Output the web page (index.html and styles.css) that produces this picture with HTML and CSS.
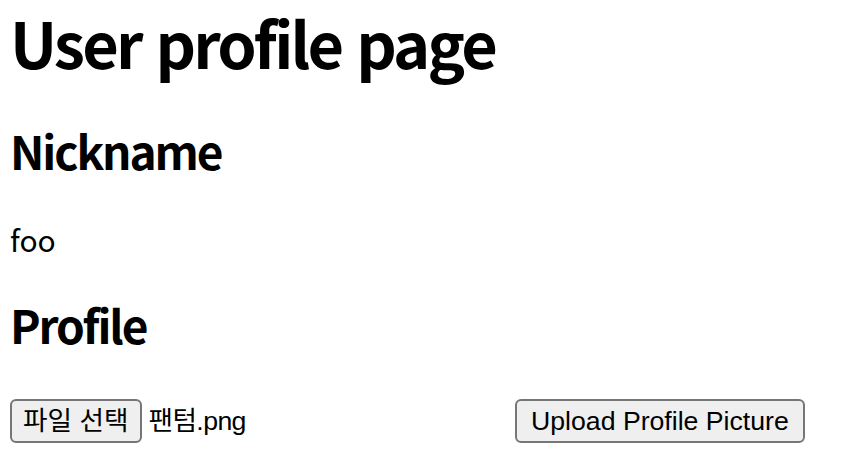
FILE: index.html
```html
<!DOCTYPE html>
<html lang="ko">
<head>
<meta charset="utf-8">
<title>User profile page</title>
<link rel="stylesheet" href="styles.css">
</head>
<body>
<main class="page">
  <h1 class="page-title">User profile page</h1>
  <section class="section">
    <h2 class="section-title">Nickname</h2>
    <p class="nickname">foo</p>
  </section>
  <section class="section section-profile">
    <h2 class="section-title">Profile</h2>
    <form class="upload-row">
      <div class="file-picker">
        <button type="button" class="btn">파일 선택</button>
        <span class="file-name">팬텀.png</span>
      </div>
      <button type="button" class="btn btn-upload">Upload Profile Picture</button>
    </form>
  </section>
</main>
</body>
</html>
```

FILE: styles.css
```css
* { box-sizing: border-box; }

html, body {
  margin: 0;
  padding: 0;
  background: #ffffff;
}

body {
  font-family: "Noto Sans CJK KR", "Noto Sans", sans-serif;
  color: #000000;
  font-size: 32px;
}

.page {
  padding: 2px 10px 0;
  display: flex;
  flex-direction: column;
}

.page-title {
  margin: 0;
  font-size: 63px;
  font-weight: 700;
  line-height: 80px;
  letter-spacing: -2.8px;
}

.section {
  display: flex;
  flex-direction: column;
}

.section-title {
  margin: 40px 0 0;
  font-size: 46px;
  font-weight: 700;
  line-height: 56px;
  letter-spacing: -2.1px;
}

.section-profile .section-title {
  margin-top: 37px;
}

.nickname {
  margin: 41px 0 0;
  font-size: 30px;
  line-height: 40px;
}

.upload-row {
  margin: 47px 0 0;
  display: flex;
  align-items: center;
}

.file-picker {
  width: 505px;
  display: flex;
  align-items: center;
  gap: 7px;
}

.btn {
  font-family: "Liberation Sans", "Noto Sans CJK KR", sans-serif;
  font-size: 26.67px;
  line-height: 34px;
  color: #000000;
  background: #efefef;
  border: 2px solid #767676;
  border-radius: 6px;
  padding: 3px 11px;
  margin: 0;
}

.file-name {
  font-family: "Liberation Sans", "Noto Sans CJK KR", sans-serif;
  font-size: 26.67px;
  line-height: 34px;
  letter-spacing: -0.6px;
}

.btn-upload {
  padding: 3px 14px;
}
```
